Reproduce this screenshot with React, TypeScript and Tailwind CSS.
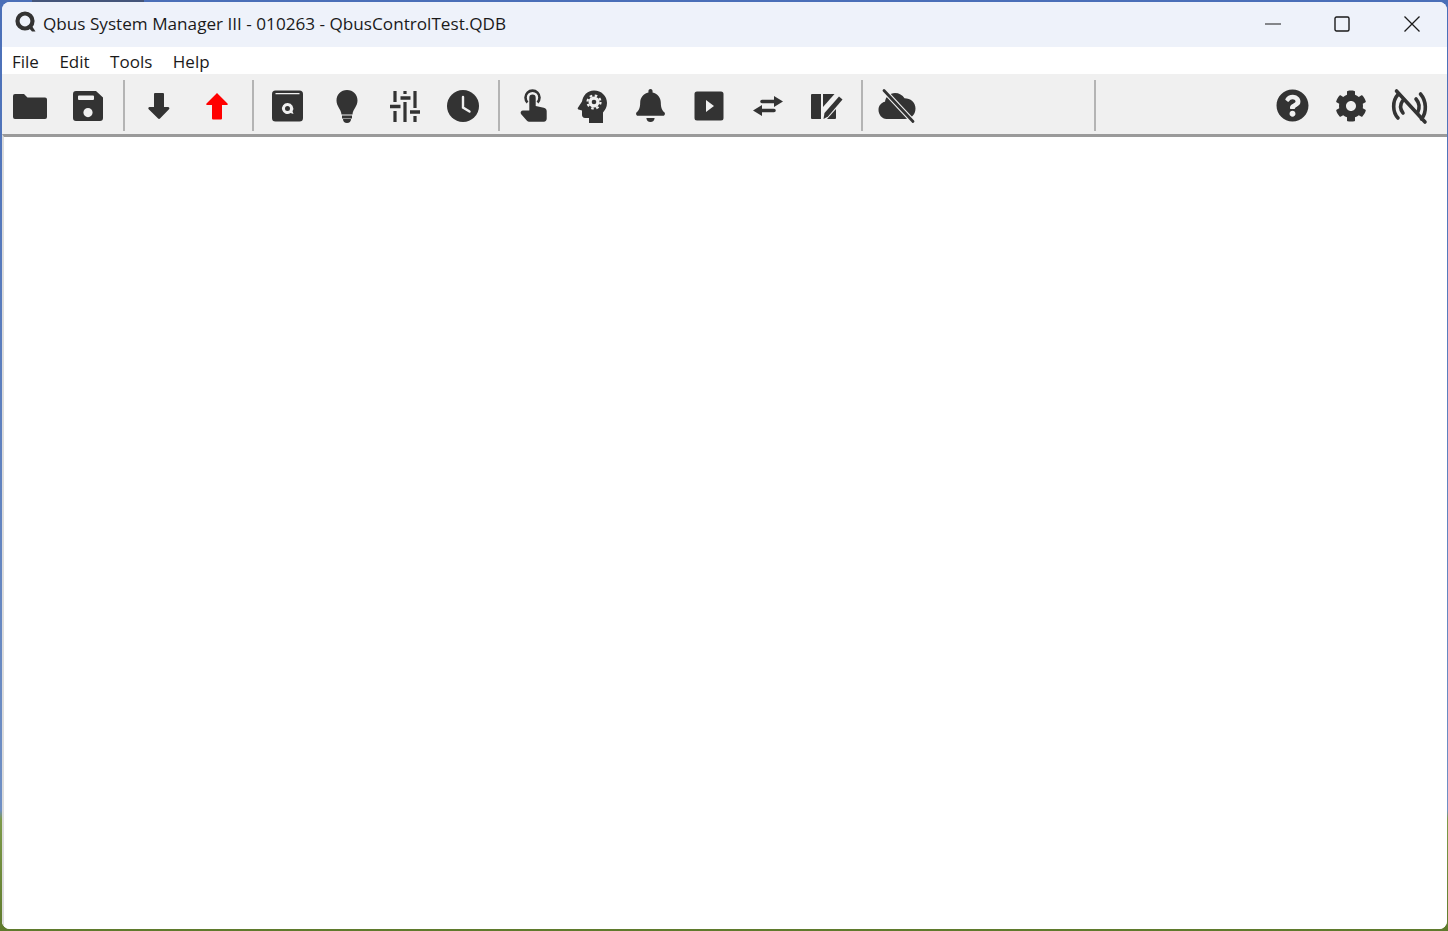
import { FaBell, FaCog, FaQuestionCircle } from 'react-icons/fa';
import type { ReactNode } from 'react';

const BG = '#f0f0f0';
const INK = '#333333';

function Glyph({ children }: { children: ReactNode }) {
  return (
    <svg width="40" height="40" viewBox="0 0 40 40" fill={INK} className="blur-[0.5px]">
      {children}
    </svg>
  );
}

const FolderIcon = (
  <Glyph>
    <path d="M5 8h9l3.5 3.500H35a2 2 0 0 1 2 2V31a2 2 0 0 1-2 2H5a2 2 0 0 1-2-2V10a2 2 0 0 1 2-2z" />
  </Glyph>
);

const SaveIcon = (
  <Glyph>
    <path
      fillRule="evenodd"
      d="M8 5h20l7 6.500V32a3 3 0 0 1-3 3H8a3 3 0 0 1-3-3V8a3 3 0 0 1 3-3zM11 9.500a1 1 0 0 0-1 1v2.500a1 1 0 0 0 1 1h14a1 1 0 0 0 1-1v-2.500a1 1 0 0 0-1-1zM20 22a4.600 4.600 0 1 0 0 9.200 4.600 4.600 0 0 0 0-9.200z"
    />
  </Glyph>
);

const DownIcon = (
  <Glyph>
    <path d="M16 7h8a1 1 0 0 1 1 1v13h4a1.300 1.300 0 0 1 1 2.200l-9 9.300a1.300 1.300 0 0 1-1.900 0l-9.400-9.300a1.300 1.300 0 0 1 1-2.200H15V8a1 1 0 0 1 1-1z" />
  </Glyph>
);

const UpIcon = (
  <Glyph>
    <path fill="#ff0000" d="M20 7l10.500 10.500q.8 1.200-.5 1.500h-5v13.500a1 1 0 0 1-1 1h-8a1 1 0 0 1-1-1V19h-5q-1.300-.3-.5-1.500z" />
  </Glyph>
);

const BookIcon = (
  <Glyph>
    <path
      fillRule="evenodd"
      d="M7.500 4.500h24a3.500 3.500 0 0 1 3.500 3.500v24a3.500 3.500 0 0 1-3.500 3.500h-24A3.500 3.500 0 0 1 4 32V8a3.500 3.500 0 0 1 3.500-3.500zM7.500 7v1.300h24V7zM19.500 17a5.500 5.500 0 1 0 3 10.100l3 1-1-2.800a5.500 5.500 0 0 0-5-8.300zm0 3a2.500 2.500 0 1 1 0 5 2.500 2.500 0 0 1 0-5z"
    />
  </Glyph>
);

const BulbIcon = (
  <Glyph>
    <path d="M21 4c6 0 10.500 4.500 10.500 10.500 0 6-4.500 8.500-5 14h-11c-.5-5.500-5-8-5-14C10.500 8.500 15 4 21 4z" />
    <path d="M16 29.500h10v3H16zM17 33h8c0 2.500-1.500 4-4 4s-4-1.500-4-4z" />
  </Glyph>
);

const SlidersIcon = (
  <Glyph>
    <g fill="none" stroke={INK} strokeWidth="3.200">
      <path d="M10 5v11M10 25v11M20 5v3M20 16v20M30 5v17M30 30v6" />
      <path d="M5 20.500h10.500M15.500 12h10M25 26h10" strokeWidth="3.500" />
    </g>
  </Glyph>
);

const ClockIcon = (
  <Glyph>
    <circle cx="20" cy="20" r="16" />
    <path d="M20 11v10.500l6.500 4" fill="none" stroke={BG} strokeWidth="2.400" strokeLinecap="round" />
  </Glyph>
);

const HandIcon = (
  <Glyph>
    <path d="M13.500 16.500a7 7 0 1 1 10 0" fill="none" stroke={INK} strokeWidth="2.600" />
    <path d="M18.500 8.500a3.200 3.200 0 0 1 3.200 3.200v8.300l8 1.800c2 .5 3 1.700 3 3.700v7c0 2-1 3.200-3 3.200H16c-1.500 0-2.500-.5-3.500-1.500L7 28c-1-1.500 0-3.500 2-3.500h6.300V11.700a3.200 3.200 0 0 1 3.200-3.200z" />
  </Glyph>
);

const HeadIcon = (
  <Glyph>
    <path d="M22 4.500c7.500 0 13 5.500 13 12.500 0 4.500-2 7-4 9.500V37H17v-5h-4c-2 0-3-1.500-3-3v-4.500l-3.500-1c-.8-.3-1-1-.6-1.700L10 15.500C11 9.500 15 4.500 22 4.500z" />
    <circle cx="22" cy="16" r="5.500" fill={BG} />
    <circle cx="22" cy="16" r="6.500" fill="none" stroke={BG} strokeWidth="2.200" strokeDasharray="2.550 2.550" />
    <circle cx="22" cy="16" r="2.300" fill={INK} />
  </Glyph>
);

const PlayIcon = (
  <Glyph>
    <path
      fillRule="evenodd"
      d="M8 5.500h24A2.500 2.500 0 0 1 34.500 8v24a2.500 2.500 0 0 1-2.500 2.500H8A2.500 2.500 0 0 1 5.500 32V8A2.500 2.500 0 0 1 8 5.500zM17 14v12l8-6z"
    />
  </Glyph>
);

const SwapIcon = (
  <Glyph>
    <path d="M26 10l9 5.500-9 5.500v-3.700H14a1.800 1.800 0 0 1 0-3.600h12z" />
    <path d="M14 19l-9 5.500 9 5.500v-3.700h12a1.800 1.800 0 0 0 0-3.600H14z" />
  </Glyph>
);

const NoteIcon = (
  <Glyph>
    <path d="M6 8h9v25H6a1 1 0 0 1-1-1V9a1 1 0 0 1 1-1z" />
    <path d="M17 8h11.500L17 21z" />
    <path d="M30 23v9a1 1 0 0 1-1 1H21z" />
    <path d="M17.500 33l1-6L33 10.500l3.500 3L22 30.500z" />
  </Glyph>
);

const CloudOffIcon = (
  <Glyph>
    <path d="M1.500 24c0-4.500 3-7.500 6.500-8.200C8.500 10.500 13 7 18 7c4 0 7.500 2 9.500 5.200 6 0 11 3.800 11 10.300S33.500 33 28 33H9.500c-4.500 0-8-4.500-8-9z" />
    <path d="M7 4.500l29 31" stroke={BG} strokeWidth="5" />
    <path d="M7 4.500l29 31" stroke={INK} strokeWidth="2.800" strokeLinecap="round" />
  </Glyph>
);

const SignalOffIcon = (
  <Glyph>
    <g fill="none" stroke={INK} strokeWidth="3.600" strokeLinecap="round">
      <path d="M8 8.500C2 15 2.500 26 8 32" />
      <path d="M12.500 15c-2.500 3.500-2.500 8 .5 12" />
      <path d="M30.500 8c6 7 6.500 18 1 25" />
      <path d="M26 13c3.500 4 4 9 1.500 14" />
      <path d="M6.500 5l28.500 31" />
    </g>
  </Glyph>
);

function FaGlyph({ children }: { children: ReactNode }) {
  return <span className="flex text-[#333333] blur-[0.5px]">{children}</span>;
}

function ToolButton({ children }: { children: ReactNode }) {
  return <div className="flex h-full w-[58.5px] shrink-0 items-center justify-center">{children}</div>;
}

function Separator() {
  return (
    <div className="flex h-full w-3 shrink-0 items-center justify-center">
      <div className="h-[51px] w-[2px] bg-[#b4b4b4]" />
    </div>
  );
}

const menuItems = ['File', 'Edit', 'Tools', 'Help'];

export default function App() {
  return (
    <div className="relative h-[931px] w-[1448px] overflow-hidden bg-[linear-gradient(180deg,#4a6fb8_0%,#6f8fc4_87%,#7d9a4a_88%,#5f7a2c_100%)] pt-[2px] pr-[1px] pb-[2px] pl-[2px] font-['Open_Sans',sans-serif]">
      {/* desktop text peeking out above the window */}
      <div className="absolute top-0 left-[32px] h-[2px] w-[112px] bg-[#44557a]" />
      <div className="flex h-full flex-col overflow-hidden rounded-lg bg-white">
        {/* Title bar */}
        <div className="flex h-[45px] shrink-0 items-center bg-[#eef2fa] pl-[11px]">
          <svg width="24" height="24" viewBox="0 0 24 24" className="mb-[5px] shrink-0">
            <circle cx="12" cy="11" r="7.500" fill="none" stroke="#333333" strokeWidth="4.200" />
            <path d="M14 16l5 5.500h3.500l-4.500-7z" fill="#333333" />
          </svg>
          <span className="mb-[2px] ml-[6px] whitespace-nowrap text-[17.15px] leading-none text-[#1a1a1a]">
            Qbus System Manager III - 010263 - QbusControlTest.QDB
          </span>
          <div className="mb-[2px] ml-auto flex h-full items-center">
            <div className="flex w-[69px] justify-center">
              <svg width="16" height="16" viewBox="0 0 16 16">
                <path d="M0 8h16" stroke="#1a1a1a" strokeWidth="1.200" />
              </svg>
            </div>
            <div className="flex w-[70px] justify-center">
              <svg width="16" height="16" viewBox="0 0 16 16">
                <rect x="1" y="1" width="14" height="14" rx="1.500" fill="none" stroke="#1a1a1a" strokeWidth="1.400" />
              </svg>
            </div>
            <div className="flex w-[70px] justify-center">
              <svg width="16" height="16" viewBox="0 0 16 16">
                <path d="M.5.5l15 15M15.500.5l-15 15" stroke="#1a1a1a" strokeWidth="1.300" />
              </svg>
            </div>
          </div>
        </div>

        {/* Menu bar */}
        <div className="flex h-[27px] shrink-0 items-center gap-[20.5px] bg-white pt-[2px] pl-[10px] text-[17px] leading-none text-[#1a1a1a]">
          {menuItems.map((item) => (
            <span key={item}>{item}</span>
          ))}
        </div>

        {/* Toolbar */}
        <div className="flex h-[60px] shrink-0 items-center bg-[#f0f0f0] pt-[3px]">
          <div className="-ml-[1.5px] flex h-full shrink-0">
            <ToolButton>{FolderIcon}</ToolButton>
          </div>
          <ToolButton>{SaveIcon}</ToolButton>
          <Separator />
          <ToolButton>{DownIcon}</ToolButton>
          <ToolButton>{UpIcon}</ToolButton>
          <Separator />
          <ToolButton>{BookIcon}</ToolButton>
          <ToolButton>{BulbIcon}</ToolButton>
          <ToolButton>{SlidersIcon}</ToolButton>
          <ToolButton>{ClockIcon}</ToolButton>
          <Separator />
          <ToolButton>{HandIcon}</ToolButton>
          <ToolButton>{HeadIcon}</ToolButton>
          <ToolButton>
            <FaGlyph>
              <FaBell size={33} />
            </FaGlyph>
          </ToolButton>
          <ToolButton>{PlayIcon}</ToolButton>
          <ToolButton>{SwapIcon}</ToolButton>
          <ToolButton>{NoteIcon}</ToolButton>
          <Separator />
          <ToolButton>{CloudOffIcon}</ToolButton>
          <div className="w-[163px] shrink-0" />
          <Separator />
          <div className="flex-1" />
          <ToolButton>
            <FaGlyph>
              <FaQuestionCircle size={33} />
            </FaGlyph>
          </ToolButton>
          <ToolButton>
            <FaGlyph>
              <FaCog size={32} />
            </FaGlyph>
          </ToolButton>
          <ToolButton>{SignalOffIcon}</ToolButton>
          <div className="w-[8px] shrink-0" />
        </div>

        {/* Empty workspace */}
        <div className="min-h-0 flex-1 border-t-[3px] border-l-[2px] border-t-[#9a9a9a] border-l-[#dcdcdc] bg-white" />
      </div>
    </div>
  );
}
